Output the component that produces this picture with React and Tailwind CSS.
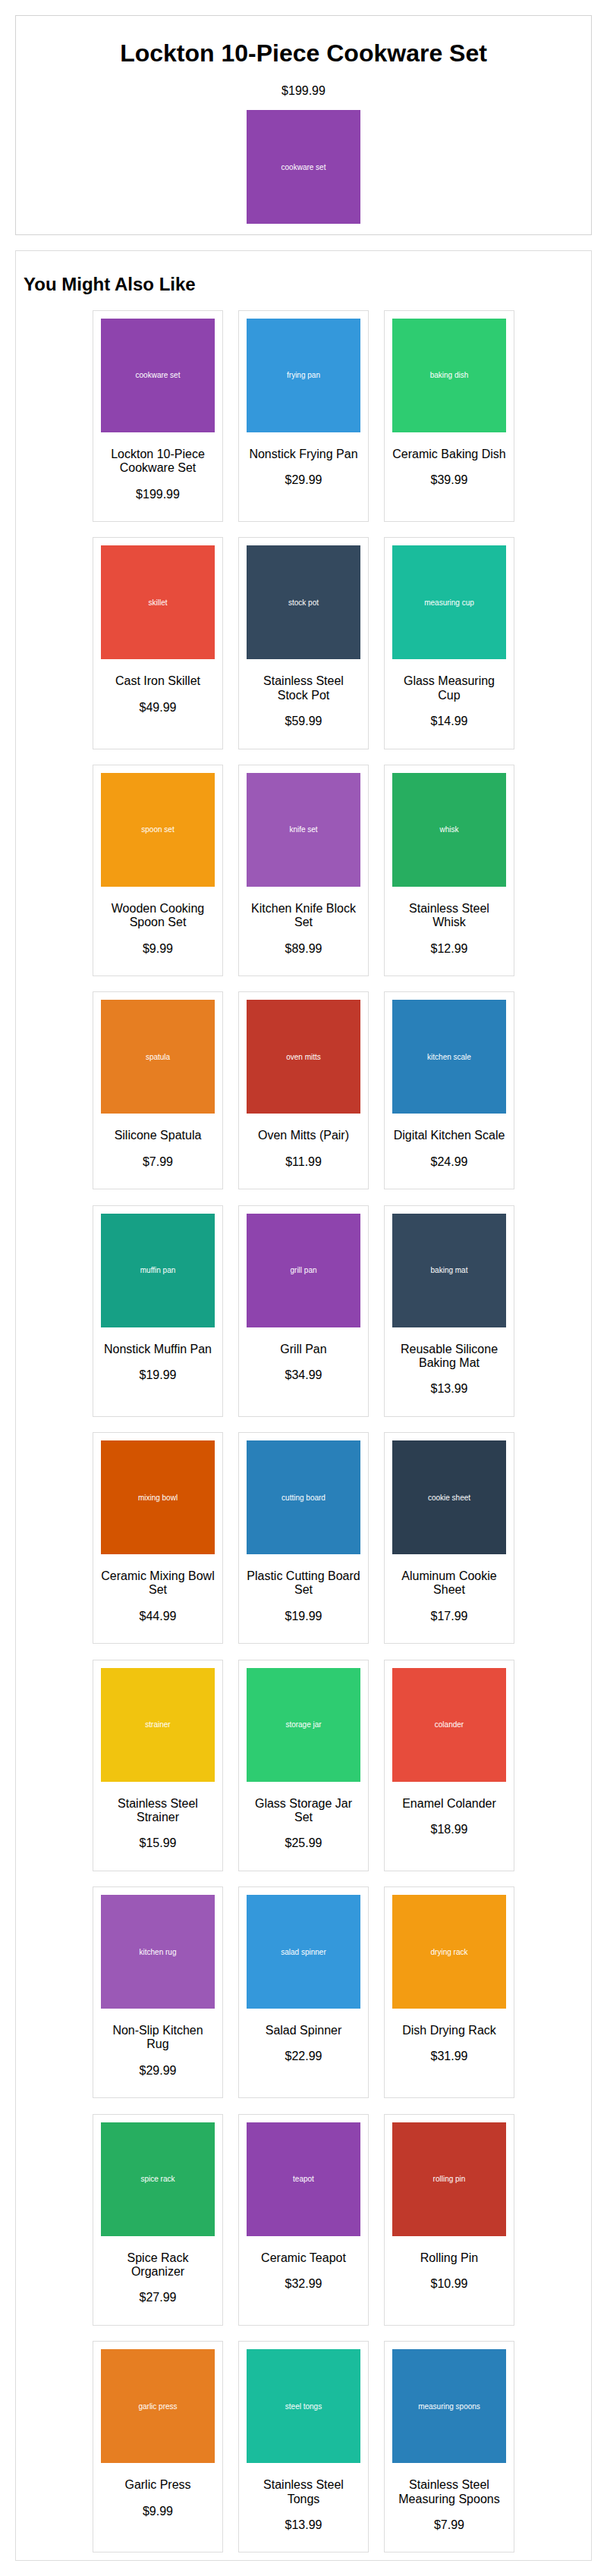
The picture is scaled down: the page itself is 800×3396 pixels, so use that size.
import React from 'react';

// Product page with "You Might Also Like" grid.

const related = [
  { name: 'Lockton 10-Piece Cookware Set', price: '$199.99', label: 'cookware set', bg: 'bg-[#8e44ad]' },
  { name: 'Nonstick Frying Pan', price: '$29.99', label: 'frying pan', bg: 'bg-[#3498db]' },
  { name: 'Ceramic Baking Dish', price: '$39.99', label: 'baking dish', bg: 'bg-[#2ecc71]' },
  { name: 'Cast Iron Skillet', price: '$49.99', label: 'skillet', bg: 'bg-[#e74c3c]' },
  { name: 'Stainless Steel Stock Pot', price: '$59.99', label: 'stock pot', bg: 'bg-[#34495e]' },
  { name: 'Glass Measuring Cup', price: '$14.99', label: 'measuring cup', bg: 'bg-[#1abc9c]' },
  { name: 'Wooden Cooking Spoon Set', price: '$9.99', label: 'spoon set', bg: 'bg-[#f39c12]' },
  { name: 'Kitchen Knife Block Set', price: '$89.99', label: 'knife set', bg: 'bg-[#9b59b6]' },
  { name: 'Stainless Steel Whisk', price: '$12.99', label: 'whisk', bg: 'bg-[#27ae60]' },
  { name: 'Silicone Spatula', price: '$7.99', label: 'spatula', bg: 'bg-[#e67e22]' },
  { name: 'Oven Mitts (Pair)', price: '$11.99', label: 'oven mitts', bg: 'bg-[#c0392b]' },
  { name: 'Digital Kitchen Scale', price: '$24.99', label: 'kitchen scale', bg: 'bg-[#2980b9]' },
  { name: 'Nonstick Muffin Pan', price: '$19.99', label: 'muffin pan', bg: 'bg-[#16a085]' },
  { name: 'Grill Pan', price: '$34.99', label: 'grill pan', bg: 'bg-[#8e44ad]' },
  { name: 'Reusable Silicone Baking Mat', price: '$13.99', label: 'baking mat', bg: 'bg-[#34495e]' },
  { name: 'Ceramic Mixing Bowl Set', price: '$44.99', label: 'mixing bowl', bg: 'bg-[#d35400]' },
  { name: 'Plastic Cutting Board Set', price: '$19.99', label: 'cutting board', bg: 'bg-[#2980b9]' },
  { name: 'Aluminum Cookie Sheet', price: '$17.99', label: 'cookie sheet', bg: 'bg-[#2c3e50]' },
  { name: 'Stainless Steel Strainer', price: '$15.99', label: 'strainer', bg: 'bg-[#f1c40f]' },
  { name: 'Glass Storage Jar Set', price: '$25.99', label: 'storage jar', bg: 'bg-[#2ecc71]' },
  { name: 'Enamel Colander', price: '$18.99', label: 'colander', bg: 'bg-[#e74c3c]' },
  { name: 'Non-Slip Kitchen Rug', price: '$29.99', label: 'kitchen rug', bg: 'bg-[#9b59b6]' },
  { name: 'Salad Spinner', price: '$22.99', label: 'salad spinner', bg: 'bg-[#3498db]' },
  { name: 'Dish Drying Rack', price: '$31.99', label: 'drying rack', bg: 'bg-[#f39c12]' },
  { name: 'Spice Rack Organizer', price: '$27.99', label: 'spice rack', bg: 'bg-[#27ae60]' },
  { name: 'Ceramic Teapot', price: '$32.99', label: 'teapot', bg: 'bg-[#8e44ad]' },
  { name: 'Rolling Pin', price: '$10.99', label: 'rolling pin', bg: 'bg-[#c0392b]' },
  { name: 'Garlic Press', price: '$9.99', label: 'garlic press', bg: 'bg-[#e67e22]' },
  { name: 'Stainless Steel Tongs', price: '$13.99', label: 'steel tongs', bg: 'bg-[#1abc9c]' },
  { name: 'Stainless Steel Measuring Spoons', price: '$7.99', label: 'measuring spoons', bg: 'bg-[#2980b9]' },
];

function Placeholder({ label, bg, className = '' }) {
  return (
    <div className={`w-[150px] h-[150px] flex items-center justify-center text-[10px] text-white ${bg} ${className}`}>
      {label}
    </div>
  );
}

export default function App() {
  return (
    <div className="p-5 bg-white text-black font-['Liberation_Sans',Arial,sans-serif]">
      <div className="border border-[#d4d4d4] p-[10px] text-center">
        <h1 className="my-[21.44px] text-[32px] font-bold leading-[37px]">Lockton 10-Piece Cookware Set</h1>
        <p className="my-4 text-base leading-[18.4px]">$199.99</p>
        <Placeholder label="cookware set" bg="bg-[#8e44ad]" className="mx-auto mb-[4px]" />
      </div>

      <div className="mt-5 border border-[#dcdcdc] p-[10px]">
        <h2 className="my-5 text-[24px] font-bold leading-[27.6px]">You Might Also Like</h2>
        <div className="grid grid-cols-[repeat(3,172px)] justify-center gap-x-5 gap-y-[20.3px]">
          {related.map((item) => (
            <div key={item.name} className="border border-[#ddd] p-[10px] text-center">
              <Placeholder label={item.label} bg={item.bg} />
              <p className="mt-[20px] text-base leading-[18.4px]">{item.name}</p>
              <p className="mt-4 mb-4 text-base leading-[18.4px]">{item.price}</p>
            </div>
          ))}
        </div>
      </div>
    </div>
  );
}
